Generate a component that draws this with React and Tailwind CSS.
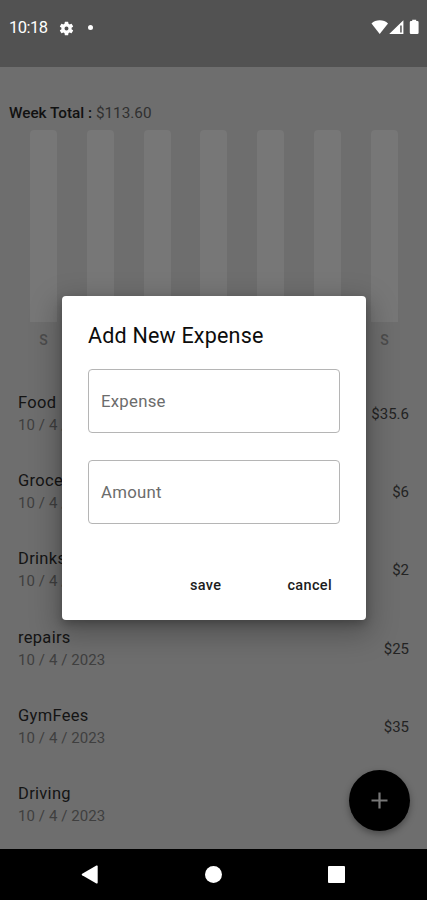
const days = ["S", "", "", "", "", "", "S"];

const expenses = [
  { name: "Food", amount: "$35.6" },
  { name: "Groceries", amount: "$6" },
  { name: "Drinks", amount: "$2" },
  { name: "repairs", amount: "$25" },
  { name: "GymFees", amount: "$35" },
  { name: "Driving", amount: "" },
];

function StatusBar() {
  return (
    <header className="flex h-[67px] shrink-0 items-start justify-between bg-[#525252] pt-[18px] pr-[7px] pl-[9px] text-white">
      <div className="flex h-5 items-center">
        <span className="w-[39px] text-[16.5px] leading-[22px] tracking-[-0.5px] whitespace-nowrap">10:18</span>
        <svg className="ml-[10px] size-[17px]" viewBox="0 0 24 24" fill="currentColor">
          <path d="M19.14 12.94c.04-.3.06-.61.06-.94 0-.32-.02-.64-.07-.94l2.03-1.58a.49.49 0 0 0 .12-.61l-1.92-3.32a.49.49 0 0 0-.59-.22l-2.39.96a7 7 0 0 0-1.62-.94l-.36-2.54a.48.48 0 0 0-.48-.41h-3.84a.47.47 0 0 0-.47.41l-.36 2.54c-.59.24-1.13.57-1.62.94l-2.39-.96a.48.48 0 0 0-.59.22L2.74 8.87a.47.47 0 0 0 .12.61l2.03 1.58c-.05.3-.09.63-.09.94s.02.64.07.94l-2.03 1.58a.49.49 0 0 0-.12.61l1.92 3.32c.12.22.37.29.59.22l2.39-.96c.5.38 1.03.7 1.62.94l.36 2.54c.05.24.24.41.48.41h3.84c.24 0 .44-.17.47-.41l.36-2.54a7 7 0 0 0 1.62-.94l2.39.96c.22.08.47 0 .59-.22l1.92-3.32a.47.47 0 0 0-.12-.61zM12 14.8a2.8 2.8 0 1 1 0-5.6 2.8 2.8 0 0 1 0 5.6z" />
        </svg>
        <span className="mb-px ml-[13px] size-[5px] rounded-full bg-white" />
      </div>
      <svg className="mt-px h-[16px] w-[50px]" viewBox="0 0 50 16" fill="currentColor">
        <path d="M1.5 4.5C5.5.2 14 .2 18 4.5L9.700 15z" />
        <path fillRule="evenodd" d="M33.4 1.200V15H19.200zM30.2 6.400h1.500v7.200h-1.500z" />
        <path d="M42.200 2V.8h4V2h1.200q1.200 0 1.200 1.200v10.600q0 1.200-1.200 1.200h-6.400q-1.200 0-1.200-1.200V3.200Q39.800 2 41 2z" />
      </svg>
    </header>
  );
}

function WeekChart() {
  return (
    <div className="flex h-[222px] shrink-0 justify-between pr-[29px] pl-[30px]">
      {days.map((day, i) => (
        <div key={i} className="flex w-[27px] flex-col items-center">
          <div className="h-[192px] w-full rounded-t-[4px] bg-[#777777]" />
          <span className="mt-[8px] text-[14px] leading-5 font-medium text-[#4c4c4c]">{day}</span>
        </div>
      ))}
    </div>
  );
}

function ExpenseRow({ name, amount }) {
  return (
    <li className="flex h-[78.2px] items-center justify-between pr-[18px] pl-[18px]">
      <div>
        <p className="text-[16.500px] leading-[22px] tracking-[0.3px] text-[#141414]">{name}</p>
        <p className="mt-px text-[15px] leading-[21px] tracking-[0.08px] text-[#3f3f3f]">10 / 4 / 2023</p>
      </div>
      <span className="text-[15px] leading-5 text-[#232323]">{amount}</span>
    </li>
  );
}

function Field({ label }) {
  return (
    <div className="flex h-[64px] items-center rounded-[4px] border border-[#b5b5b5] px-3 pt-px text-[16.800px] tracking-[0.25px] text-[#6c6c6c]">
      {label}
    </div>
  );
}

function ExpenseDialog() {
  return (
    <section className="absolute top-[296px] left-[62px] flex h-[324px] w-[304px] flex-col rounded-[4px] bg-white px-[26px] pt-[26px] shadow-[0_10px_28px_5px_rgba(0,0,0,0.25),0_4px_8px_rgba(0,0,0,0.22)]">
      <h2 className="text-[21.500px] leading-7 tracking-[0.2px] whitespace-nowrap text-[#0c0c0c]">Add New Expense</h2>
      <div className="mt-[19px] flex flex-col gap-[27px]">
        <Field label="Expense" />
        <Field label="Amount" />
      </div>
      <div className="mt-[52px] flex justify-end gap-[66px] pr-[8px] text-[14.500px] leading-5 font-medium tracking-[0.35px] text-[#1c1c1c]">
        <button>save</button>
        <button>cancel</button>
      </div>
    </section>
  );
}

function NavigationBar() {
  return (
    <nav className="flex h-[51px] shrink-0 items-center justify-between bg-black pr-[82px] pl-[81px] text-white">
      <svg className="h-[19px] w-[17px]" viewBox="0 0 17 19" fill="currentColor">
        <path d="M15.400.6q1.300-.6 1.300.8v16.200q0 1.400-1.300.8L1.200 10.200q-1.200-.7 0-1.400z" />
      </svg>
      <span className="size-[17px] rounded-full bg-white" />
      <span className="size-[17px] rounded-[1px] bg-white" />
    </nav>
  );
}

export default function App() {
  return (
    <div className="relative flex h-[900px] w-[427px] flex-col overflow-hidden bg-[#6e6e6e] font-[Roboto,'Liberation_Sans',sans-serif]">
      <StatusBar />
      <main className="flex min-h-0 flex-1 flex-col overflow-hidden">
        <p className="mt-[36px] mb-[6px] pl-[9px] text-[15.300px] leading-[21px] text-[#303030]">
          <span className="font-medium text-[#111111]">Week Total :</span> $113.60
        </p>
        <WeekChart />
        <ul className="mt-[23px]">
          {expenses.map((e) => (
            <ExpenseRow key={e.name} name={e.name} amount={e.amount} />
          ))}
        </ul>
      </main>
      <NavigationBar />
      <button className="absolute top-[770px] left-[349px] flex size-[61px] items-center justify-center rounded-full bg-black shadow-[0_3px_7px_rgba(0,0,0,0.35)]">
        <svg className="size-[17px]" viewBox="0 0 17 17" fill="none" stroke="#777777" strokeWidth="2.200">
          <path d="M8.500 .5v16M.5 8.500h16" />
        </svg>
      </button>
      <ExpenseDialog />
    </div>
  );
}
